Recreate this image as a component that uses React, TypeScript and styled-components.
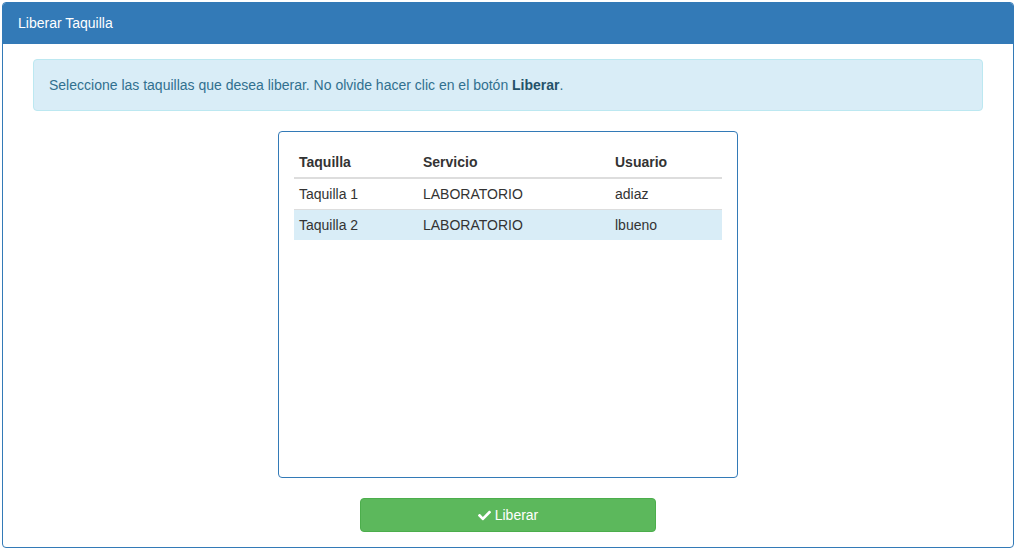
import React from "react";
import styled, { createGlobalStyle } from "styled-components";
import { FaCheck } from "react-icons/fa";

const Global = createGlobalStyle`
  * { box-sizing: border-box; }
  body {
    margin: 0;
    font-family: "Liberation Sans", Arial, Helvetica, sans-serif;
    font-size: 14px;
    line-height: 20px;
    color: #333;
    background: #fff;
  }
`;

const Page = styled.div`
  padding: 2px 3px 2px 2px;
`;

const Panel = styled.div`
  border: 1px solid #337ab7;
  border-radius: 4px;
  background: #fff;
`;

const Heading = styled.div`
  background: #337ab7;
  color: #fff;
  padding: 10px 15px;
  border-bottom: 1px solid #337ab7;
  border-radius: 3px 3px 0 0;
  font-size: 14px;
  line-height: 20px;
`;

const Body = styled.div`
  padding: 15px 30px;
  display: flex;
  flex-direction: column;
  align-items: center;
`;

const Alert = styled.div`
  align-self: stretch;
  background: #d9edf7;
  border: 1px solid #bce8f1;
  color: #31708f;
  border-radius: 4px;
  padding: 15px;
  margin-bottom: 20px;
`;

const AlertLink = styled.b`
  color: #245269;
  font-weight: bold;
`;

const TableBox = styled.div`
  width: 460px;
  height: 347px;
  border: 1px solid #337ab7;
  border-radius: 4px;
  padding: 15px;
  margin-bottom: 20px;
`;

const Table = styled.table`
  width: 100%;
  border-collapse: collapse;
  border-spacing: 0;
`;

const Th = styled.th<{ $w?: number }>`
  text-align: left;
  font-weight: bold;
  padding: 5px;
  line-height: 20px;
  border-bottom: 2px solid #ddd;
  width: ${(p) => (p.$w ? `${p.$w}px` : "auto")};
`;

const Tr = styled.tr<{ $active?: boolean }>`
  background: ${(p) => (p.$active ? "#d9edf7" : "transparent")};
`;

const Td = styled.td`
  padding: 5px;
  line-height: 20px;
  border-top: 1px solid #ddd;
`;

const Button = styled.button`
  width: 296px;
  height: 34px;
  background: #5cb85c;
  border: 1px solid #4cae4c;
  border-radius: 4px;
  color: #fff;
  font-family: inherit;
  font-size: 14px;
  line-height: 20px;
  display: flex;
  align-items: center;
  justify-content: center;
  gap: 4px;
  cursor: pointer;
  padding: 6px 12px;
`;

const rows = [
  { t: "Taquilla 1", s: "LABORATORIO", u: "adiaz", active: false },
  { t: "Taquilla 2", s: "LABORATORIO", u: "lbueno", active: true },
];

export default function App() {
  return (
    <Page>
      <Global />
      <Panel>
        <Heading>Liberar Taquilla</Heading>
        <Body>
          <Alert>
            Seleccione las taquillas que desea liberar. No olvide hacer clic en el botón{" "}
            <AlertLink>Liberar</AlertLink>.
          </Alert>
          <TableBox>
            <Table>
              <thead>
                <tr>
                  <Th $w={124}>Taquilla</Th>
                  <Th $w={192}>Servicio</Th>
                  <Th>Usuario</Th>
                </tr>
              </thead>
              <tbody>
                {rows.map((r) => (
                  <Tr key={r.t} $active={r.active}>
                    <Td>{r.t}</Td>
                    <Td>{r.s}</Td>
                    <Td>{r.u}</Td>
                  </Tr>
                ))}
              </tbody>
            </Table>
          </TableBox>
          <Button>
            <FaCheck size={13} />
            Liberar
          </Button>
        </Body>
      </Panel>
    </Page>
  );
}
